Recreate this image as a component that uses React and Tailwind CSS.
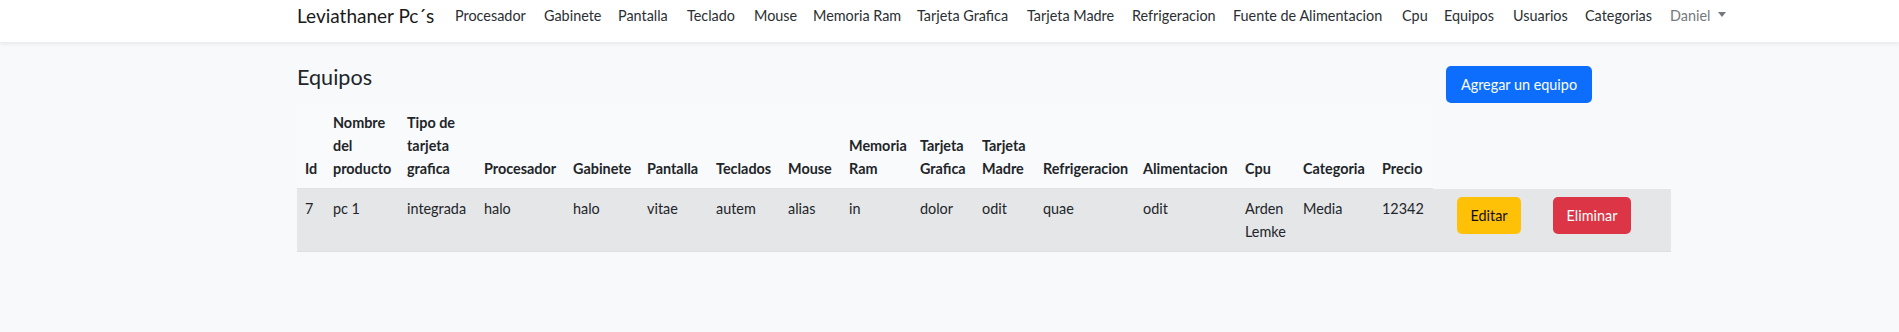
import React from 'react';

const navLinks = [
  { label: 'Procesador', w: 'w-[89px]' },
  { label: 'Gabinete', w: 'w-[74px]' },
  { label: 'Pantalla', w: 'w-[69px]' },
  { label: 'Teclado', w: 'w-[67px]' },
  { label: 'Mouse', w: 'w-[59px]' },
  { label: 'Memoria Ram', w: 'w-[104px]' },
  { label: 'Tarjeta Grafica', w: 'w-[110px]' },
  { label: 'Tarjeta Madre', w: 'w-[105px]' },
  { label: 'Refrigeracion', w: 'w-[101px]' },
  { label: 'Fuente de Alimentacion', w: 'w-[169px]' },
  { label: 'Cpu', w: 'w-[42px]' },
  { label: 'Equipos', w: 'w-[69px]' },
  { label: 'Usuarios', w: 'w-[72px]' },
  { label: 'Categorias', w: 'w-[85px]' },
];

// column widths match the reference layout
const colWidths = [28, 74, 77, 89, 74, 69, 72, 61, 71, 62, 61, 100, 102, 58, 79, 59, 104, 134];

const headers = [
  ['Id'],
  ['Nombre', 'del', 'producto'],
  ['Tipo de', 'tarjeta', 'grafica'],
  ['Procesador'],
  ['Gabinete'],
  ['Pantalla'],
  ['Teclados'],
  ['Mouse'],
  ['Memoria', 'Ram'],
  ['Tarjeta', 'Grafica'],
  ['Tarjeta', 'Madre'],
  ['Refrigeracion'],
  ['Alimentacion'],
  ['Cpu'],
  ['Categoria'],
  ['Precio'],
];

const equipo = [
  ['7'],
  ['pc 1'],
  ['integrada'],
  ['halo'],
  ['halo'],
  ['vitae'],
  ['autem'],
  ['alias'],
  ['in'],
  ['dolor'],
  ['odit'],
  ['quae'],
  ['odit'],
  ['Arden', 'Lemke'],
  ['Media'],
  ['12342'],
];

function Navbar() {
  return (
    <nav className="h-[42px] bg-white shadow-[0_2px_4px_rgba(0,0,0,0.07)] relative z-10">
      <div className="ml-[297px] flex items-center h-[30px]">
        <a className="w-[158px] text-[19px] leading-[23px] text-[#1a1a1a] whitespace-nowrap pt-[1px]">
          Leviathaner Pc´s
        </a>
        {navLinks.map((l) => (
          <a key={l.label} className={`${l.w} text-[14.4px] leading-[23px] text-[#2b2f33] whitespace-nowrap`}>
            {l.label}
          </a>
        ))}
        <a className="flex items-center gap-[8px] text-[14.4px] leading-[23px] text-[#75797d] whitespace-nowrap">
          Daniel
          <span className="inline-block w-0 h-0 border-x-[4px] border-x-transparent border-t-[5px] border-t-[#75797d] mb-[2px]" />
        </a>
      </div>
    </nav>
  );
}

export default function App() {
  return (
    <div className="min-h-[332px] bg-[#f8f9fa] font-['Lato','Noto_Sans',sans-serif] text-[#212529]">
      <Navbar />

      <div className="ml-[297px] w-[1296px] pt-[24px]">
        {/* Title + add button */}
        <div className="flex items-start justify-between">
          <h4 className="text-[21.6px] leading-[26px] font-normal text-[#212529] -mt-[2px]">Equipos</h4>
          <button className="w-[146px] h-[37px] rounded-[5px] bg-[#0d6efd] text-white text-[14.4px] leading-[23px] mr-[1px]">
            Agregar un equipo
          </button>
        </div>

        <table className="table-fixed border-collapse w-[1374px] text-[14.4px] leading-[23px]">
          <colgroup>
            {colWidths.map((w, i) => (
              <col key={i} style={{ width: w }} />
            ))}
          </colgroup>
          <thead>
            <tr>
              {headers.map((h, i) => (
                <th
                  key={i}
                  className="px-2 py-2 text-left align-bottom font-bold whitespace-nowrap bg-[#f9fafb] border-b border-[#dfe2e5]"
                >
                  {h.map((line, j) => (
                    <div key={j}>{line}</div>
                  ))}
                </th>
              ))}
            </tr>
          </thead>
          <tbody>
            <tr className="bg-[#e5e6e8] border-b border-[#dde0e3]">
              {equipo.map((c, i) => (
                <td key={i} className="px-2 py-2 align-top whitespace-nowrap">
                  {c.map((line, j) => (
                    <div key={j}>{line}</div>
                  ))}
                </td>
              ))}
              <td className="pl-6 py-2 align-top">
                <button className="w-[64px] h-[37px] rounded-[5px] bg-[#ffc107] text-[#111] text-[14.4px] leading-[23px]">
                  Editar
                </button>
              </td>
              <td className="pl-4 py-2 align-top">
                <button className="w-[78px] h-[37px] rounded-[5px] bg-[#dc3545] text-white text-[14.4px] leading-[23px]">
                  Eliminar
                </button>
              </td>
            </tr>
          </tbody>
        </table>
      </div>
    </div>
  );
}
